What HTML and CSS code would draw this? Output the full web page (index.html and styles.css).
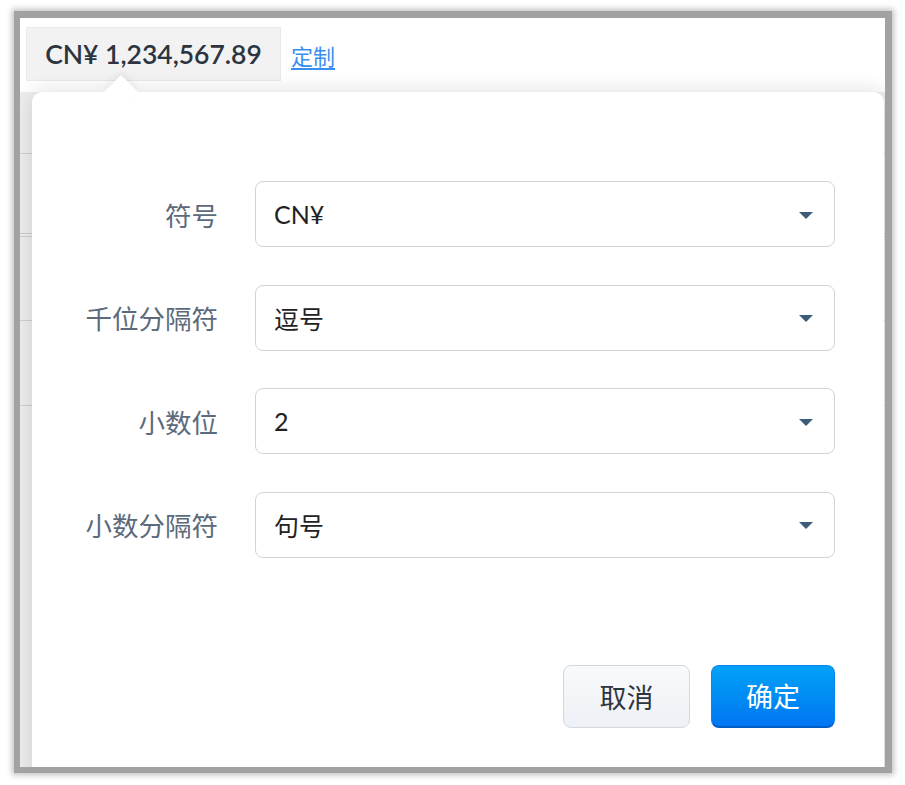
FILE: index.html
```html
<!DOCTYPE html>
<html lang="zh">
<head>
<meta charset="utf-8">
<link rel="stylesheet" href="styles.css">
</head>
<body>
<div class="frame">
  <div class="app">
    <div class="bg-rows">
      <div class="bg-row r1"></div>
      <div class="bg-row r2"></div>
      <div class="bg-row r3"></div>
      <div class="bg-row r4"></div>
      <div class="bg-row r5"></div>
    </div>
    <div class="topbar">
      <div class="amount">CN¥ 1,234,567.89</div>
      <a class="custom" href="#">定制</a>
    </div>
    <div class="popover">
      <div class="arrow"></div>
      <div class="form">
        <div class="row">
          <div class="label">符号</div>
          <div class="select"><span class="val">CN¥</span><span class="caret"></span></div>
        </div>
        <div class="row">
          <div class="label">千位分隔符</div>
          <div class="select"><span class="val">逗号</span><span class="caret"></span></div>
        </div>
        <div class="row">
          <div class="label">小数位</div>
          <div class="select"><span class="val">2</span><span class="caret"></span></div>
        </div>
        <div class="row">
          <div class="label">小数分隔符</div>
          <div class="select"><span class="val">句号</span><span class="caret"></span></div>
        </div>
      </div>
      <div class="actions">
        <button class="btn cancel">取消</button>
        <button class="btn ok">确定</button>
      </div>
    </div>
  </div>
</div>
</body>
</html>
```

FILE: styles.css
```css
* { box-sizing: border-box; }
html, body { margin: 0; padding: 0; background: #fff; }
body {
  font-family: Lato, "Noto Sans CJK SC", sans-serif;
  padding: 11px 13px 12px 14px;
}
.frame {
  width: 878px;
  height: 762px;
  border: solid #a2a2a2;
  border-width: 7px 7px 6px 6px;
  box-shadow: 0 0 6px 2px rgba(0,0,0,0.25);
  background: #fff;
}
.app {
  position: relative;
  width: 100%;
  height: 100%;
  overflow: hidden;
  background: #eeeeee;
}
.bg-rows {
  position: absolute;
  inset: 0;
}
.bg-row {
  position: absolute;
  left: 0;
  right: 0;
  height: 0;
  border-top: 1px solid #cfcfcf;
}
.r1 { top: 135px; }
.r2 { top: 215px; }
.r3 { top: 218px; }
.r4 { top: 302px; }
.r5 { top: 387px; }
.topbar {
  position: relative;
  display: flex;
  gap: 10px;
  padding: 9px 0 0 6px;
  height: 74px;
  background: #fff;
  align-items: flex-start;
}
.amount {
  width: 255px;
  height: 54px;
  background: #f2f2f2;
  border: 1px solid #e9e9e9;
  font-family: Lato, sans-serif;
  font-weight: 600;
  font-size: 26.5px;
  color: #2b3440;
  display: flex;
  align-items: center;
  justify-content: center;
}
.custom {
  margin-top: 12px;
  font-family: "Noto Sans CJK SC", sans-serif;
  font-size: 22px;
  color: #3a8ef2;
  text-decoration: underline;
  text-underline-offset: 3px;
}
.popover {
  position: relative;
  margin-left: 12px;
  width: 852px;
  height: 700px;
  background: #fff;
  border-radius: 10px 10px 0 0;
  box-shadow: 0 0 22px rgba(0,0,0,0.14);
  padding: 89px 49px 0 0;
}
.arrow {
  position: absolute;
  left: 77px;
  top: -12px;
  width: 24px;
  height: 24px;
  background: #fff;
  transform: rotate(45deg);
  box-shadow: -3px -3px 6px rgba(0,0,0,0.05);
}
.form {
  position: relative;
  display: flex;
  flex-direction: column;
  gap: 37.5px;
}
.row {
  display: flex;
  align-items: center;
  gap: 37px;
}
.label {
  width: 186px;
  text-align: right;
  font-family: "Noto Sans CJK SC", sans-serif;
  font-size: 26.5px;
  color: #5c6a7c;
}
.select {
  flex: 1;
  height: 66px;
  border: 1px solid #d3d3d3;
  border-radius: 8px;
  display: flex;
  align-items: center;
  justify-content: space-between;
  padding: 0 21px 0 18px;
  background: #fff;
}
.val {
  font-family: Lato, "Noto Sans CJK SC", sans-serif;
  font-size: 25px;
  color: #222;
}
.caret {
  width: 0;
  height: 0;
  border-left: 7px solid transparent;
  border-right: 7px solid transparent;
  border-top: 7px solid #3b5b79;
  margin-top: 2px;
}
.actions {
  position: relative;
  display: flex;
  justify-content: flex-end;
  gap: 21px;
  margin-top: 107px;
}
.btn {
  height: 63px;
  border-radius: 8px;
  font-family: "Noto Sans CJK SC", sans-serif;
  font-size: 27px;
  padding: 0;
  cursor: pointer;
}
.cancel {
  width: 127px;
  background: linear-gradient(#f9fafc, #edf0f5);
  border: 1px solid #d2d7e0;
  color: #2d3540;
}
.ok {
  width: 124px;
  background: linear-gradient(#02a2f6, #0076f2);
  border: 1px solid #0a84ef;
  border-bottom: 2px solid #005ec6;
  color: #fff;
}
```
